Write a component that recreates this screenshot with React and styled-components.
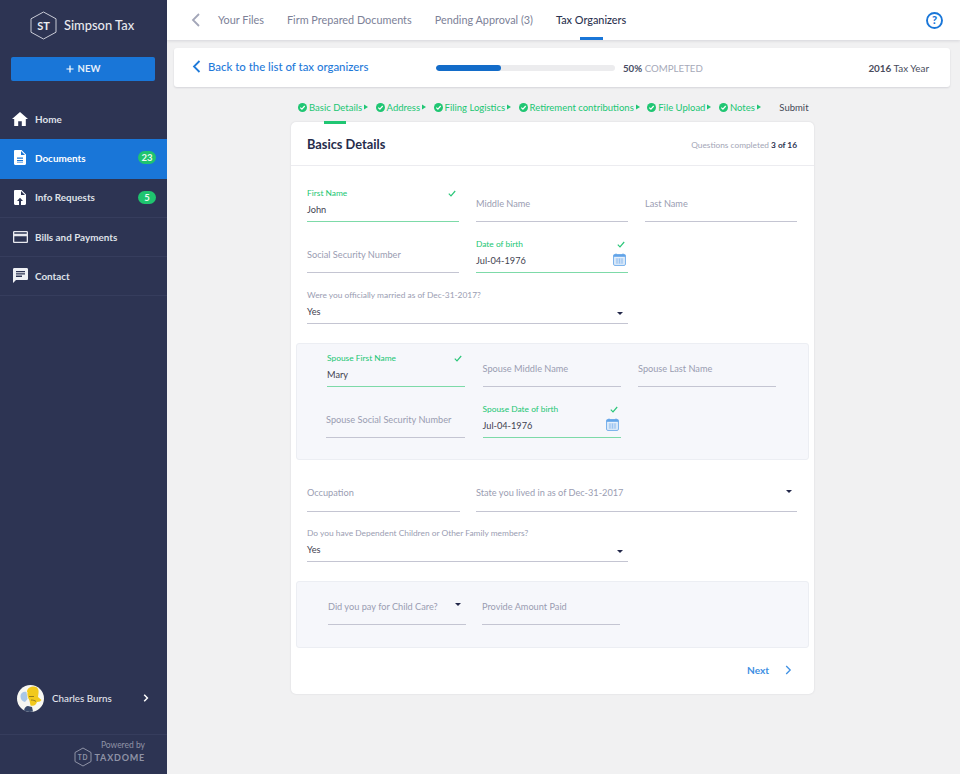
import React from 'react';
import styled, { createGlobalStyle } from 'styled-components';

const Global = createGlobalStyle`
  html, body { margin: 0; padding: 0; height: 100%; }
  body { font-family: Lato, "Open Sans", sans-serif; background: #f1f1f2; -webkit-font-smoothing: antialiased; }
  * { box-sizing: border-box; }
`;
const Page = styled.div`display: flex; width: 960px; height: 774px; overflow: hidden;`;
const Sidebar = styled.aside`width: 167px; height: 774px; flex: none; background: #2d3453; display: flex; flex-direction: column; color: #fff;`;
const Brand = styled.div`height: 57px; display: flex; align-items: center; gap: 7px; padding: 0 0 7px 30px; font-size: 12.9px; font-weight: 500; color: #e8e9ee;`;
const NewButton = styled.button`
  margin: 0 12px 0 11px; height: 24px; border: 0; border-radius: 2px; background: #1976d8; color: #e6f0fb; padding: 0 0 1px;
  font: 700 9.5px Lato, sans-serif; display: flex; align-items: center; justify-content: center; gap: 4px;
`;
const Nav = styled.nav`margin-top: 19px; display: flex; flex-direction: column;`;
const NavItem = styled.div`
  height: 39.3px; display: flex; align-items: center; padding: 0 11px 1px 12px; gap: 7px; font-size: 9.9px; font-weight: 700;
  color: ${p => p.$active ? '#fff' : '#dfe1e8'};
  background: ${p => p.$active ? '#1976d8' : 'transparent'};
  border-bottom: 1px solid ${p => p.$line ? '#363d5d' : 'transparent'};
`;
const NavIcon = styled.span`width: 16px; height: 16px; display: flex; align-items: center; justify-content: center; flex: none;`;
const NavLabel = styled.span`flex: 1;`;
const Badge = styled.span`background: #1fc46f; color: #e9fbf1; border-radius: 7px; font-size: 9.5px; font-weight: 700; height: 13px; width: 18px; display: flex; align-items: center; justify-content: center;`;
const Spacer = styled.div`flex: 1;`;
const User = styled.div`height: 73px; display: flex; align-items: center; padding: 0 18px 0 17px; gap: 8px; font-size: 9.8px; font-weight: 500; color: #e3e5ec; border-bottom: 1px solid #363d5d;`;
const Chevron = styled.span`margin-left: auto; display: flex;`;
const Powered = styled.div`height: 39px; display: flex; flex-direction: column; align-items: flex-end; padding: 6px 22px 0 0; color: #8f93a6;`;
const PoweredBy = styled.div`font-size: 8.5px; line-height: 9px;`;
const TaxDomeRow = styled.div`display: flex; align-items: center; gap: 3px; margin-top: -3px; font-size: 9px; font-weight: 700; letter-spacing: .8px;`;

const Main = styled.main`flex: 1; display: flex; flex-direction: column; min-width: 0;`;
const TopBar = styled.header`height: 40px; background: #fff; box-shadow: 0 1px 3px rgba(40,45,70,.14); display: flex; align-items: center; padding: 0 17px 0 24px; position: relative; flex: none;`;
const Tabs = styled.div`display: flex; align-items: center; gap: 23px; margin-left: 17px; height: 100%;`;
const Tab = styled.div`
  height: 100%; display: flex; align-items: center; font-size: 10.85px; position: relative; padding-bottom: 1px;
  font-weight: ${p => p.$active ? 500 : 400}; color: ${p => p.$active ? '#2c3350' : '#7c8197'};
  ${p => p.$active && `&::after{content:'';position:absolute;left:24px;bottom:0;width:23px;height:3px;background:#1976d8;}`}
`;
const Help = styled.div`margin-left: auto; display: flex;`;
const BackBar = styled.section`
  height: 39px; margin: 8px 10px 0 7px; background: #fff; border-radius: 3px; box-shadow: 0 1px 2px rgba(40,45,70,.14);
  display: flex; align-items: center; padding: 0 21px 0 18px; flex: none;
`;
const BackLink = styled.div`display: flex; align-items: center; gap: 7px; color: #1f7ad9; font-size: 11.4px; font-weight: 500; width: 244px; margin-top: -2px;`;
const Track = styled.div`width: 179px; height: 6px; border-radius: 3px; background: #ececee; flex: none; overflow: hidden;`;
const Fill = styled.div`height: 100%; border-radius: 3px; background: #136cc9;`;
const Completed = styled.div`margin-left: 8px; font-size: 9.7px; color: #a6a9b9; b { color: #474c65; font-weight: 700; }`;
const TaxYear = styled.div`margin-left: auto; font-size: 9.9px; color: #4a4d5c; b { font-weight: 700; }`;
const Steps = styled.div`height: 35px; padding-top: 5px; display: flex; align-items: center; margin-left: 131px; font-size: 9.5px; color: #20c673; flex: none;`;
const Step = styled.div`display: flex; align-items: center; margin-right: 7.5px; gap: 2px;`;
const Submit = styled.div`margin-left: 11px; color: #444856;`;
const Card = styled.section`
  position: relative; width: 523px; height: 572px; margin-left: 124px; background: #fff; border-radius: 5px;
  box-shadow: 0 0 2px rgba(40,45,70,.14); flex: none;
  &::before { content: ''; position: absolute; left: 33px; top: -1px; width: 22px; height: 3px; background: #20c673; }
`;
const CardHead = styled.div`height: 44px; border-bottom: 1px solid #ececf0; display: flex; align-items: center; justify-content: space-between; padding: 0 17px 0 16px;`;
const Title = styled.h1`margin: 0; font-size: 12.8px; font-weight: 700; color: #262c4b;`;
const Count = styled.div`font-size: 8.3px; color: #a3a6b6; margin-top: 2px; b { color: #2c3350; font-weight: 700; }`;
const Form = styled.div`padding: 5px 17px 0 16px;`;
const Grid = styled.div`display: grid; grid-template-columns: ${p => p.$cols || 'repeat(3, 152px)'}; column-gap: ${p => p.$gap || 17}px;`;
const PanelGrid = styled(Grid)`margin-top: -8px;`;
const Field = styled.div`
  position: relative; height: ${p => p.$h || 51}px; border-bottom: 1px solid ${p => p.$ok ? '#7ddaa8' : '#c4c5d2'};
  grid-column: ${p => p.$span || 'auto'};
`;
const Label = styled.div`position: absolute; left: 0; bottom: ${p => p.$up ? 13 : 12}px; font-size: 9.2px; color: #9a9db2; white-space: nowrap;`;
const Small = styled.div`position: absolute; left: 0; bottom: 23px; font-size: 8.4px; white-space: nowrap; color: ${p => p.$ok ? '#20c673' : '#9a9db2'};`;
const Value = styled.div`position: absolute; left: 0; bottom: 6px; font-size: 9.2px; color: #3f4250;`;
const Check = styled.span`position: absolute; right: 3px; bottom: 24px; display: flex;`;
const Caret = styled.span`position: absolute; right: 5px; bottom: 8px; width: 0; height: 0; border: 3px solid transparent; border-top: 3.5px solid #23284a; border-bottom: 0;`;
const CaretMid = styled(Caret)`bottom: 18px;`;
const Cal = styled.span`position: absolute; right: 2px; bottom: 6px; display: flex;`;
const Panel = styled.div`
  margin: 19px -12px 0 -11px; height: ${p => p.$h}px; background: #f6f7fb; border: 1px solid #eceef3; border-radius: 3px;
  padding: 0 0 0 ${p => p.$pl}px;
`;
const Offset = styled.div`margin-left: -1px;`;
const Footer = styled.div`display: flex; align-items: center; justify-content: flex-end; gap: 16px; padding: 16px 5px 0 0; font-size: 10.1px; font-weight: 700; color: #3f90e3;`;

const Tick = () => <svg width="8" height="7" viewBox="0 0 8 7"><path d="M.8 3.6 3 5.8 7.2 1" fill="none" stroke="#2cc77a" strokeWidth="1.2"/></svg>;
const Calendar = () => <svg width="13" height="13" viewBox="0 0 13 13"><rect x=".6" y="1.6" width="11.800" height="10.800" rx="1.200" fill="#e6f0fb" stroke="#62a4e8" strokeWidth=".9"/><rect x=".6" y="1.6" width="11.800" height="2.200" fill="#62a4e8"/><path d="M3 .5v2M10 .5v2" stroke="#62a4e8"/><path d="M2.500 6h8M2.500 8h8M2.500 10h8M4 5.500v5M6.500 5.500v5M9 5.500v5" stroke="#7db4ec" strokeWidth=".6"/></svg>;
const StepCheck = () => <svg width="9" height="9" viewBox="0 0 9 9"><circle cx="4.5" cy="4.5" r="4.5" fill="#20c673"/><path d="M2.3 4.6 3.9 6.1 6.7 3" fill="none" stroke="#fff" strokeWidth="1.2"/></svg>;
const StepArrow = () => <svg width="4" height="6" viewBox="0 0 4 6"><path d="M0 .6 4 3 0 5.4z" fill="#20c673"/></svg>;

const Plain = ({ label, span, h, up }) => <Field $span={span} $h={h}><Label $up={up}>{label}</Label></Field>;
const Filled = ({ label, value, cal }) => (
  <Field $ok><Small $ok>{label}</Small><Check><Tick/></Check><Value>{value}</Value>{cal && <Cal><Calendar/></Cal>}</Field>
);
const Select = ({ label, value, span, h }) => (
  <Field $span={span} $h={h}><Small>{label}</Small><Value>{value}</Value><Caret/></Field>
);

const steps = ['Basic Details','Address','Filing Logistics','Retirement contributions','File Upload','Notes'];

export default function App() {
  return (
    <Page>
      <Global/>
      <Sidebar>
        <Brand>
          <svg width="27" height="29" viewBox="0 0 27 29"><path d="M13.5 1 26 7.8v13.4L13.5 28 1 21.2V7.8z" fill="none" stroke="#c9cbd6" strokeWidth="1"/><text x="13.5" y="18.5" textAnchor="middle" fontFamily="Lato" fontWeight="700" fontSize="11" fill="#eceef3">ST</text></svg>
          Simpson Tax
        </Brand>
        <NewButton><svg width="8" height="8" viewBox="0 0 9 9"><path d="M4.5 .5v8M.5 4.5h8" stroke="#fff" strokeWidth="1.4"/></svg>NEW</NewButton>
        <Nav>
          <NavItem><NavIcon><svg width="16" height="14" viewBox="0 0 16 14"><path d="M8 0 0 7h2.2v7h4V9.2h3.6V14h4V7H16z" fill="#fff"/></svg></NavIcon><NavLabel>Home</NavLabel></NavItem>
          <NavItem $active><NavIcon><svg width="12" height="15" viewBox="0 0 12 15"><path fillRule="evenodd" d="M1.2 0H7.5L12 4.5v9.3c0 .7-.5 1.2-1.2 1.2H1.2C.5 15 0 14.500 0 13.800V1.200C0 .5.500 0 1.200 0zM7 1v4h4zM3 7.500v1.200h6V7.500zM3 10v1.200h6V10zM3 12.400v.6h6v-.6z" fill="#fff"/></svg></NavIcon><NavLabel>Documents</NavLabel><Badge>23</Badge></NavItem>
          <NavItem $line><NavIcon><svg width="12" height="15" viewBox="0 0 12 15"><path fillRule="evenodd" d="M1.200 0H7.500L12 4.500v9.300c0 .7-.5 1.200-1.200 1.200H7V11h2L6 7.800 3 11h2v4H1.200C.5 15 0 14.500 0 13.800V1.200C0 .5.500 0 1.200 0zM7 1v4h4z" fill="#fff"/></svg></NavIcon><NavLabel>Info Requests</NavLabel><Badge>5</Badge></NavItem>
          <NavItem $line><NavIcon><svg width="15" height="12" viewBox="0 0 15 12"><path fillRule="evenodd" d="M1.300 0h12.400C14.400 0 15 .6 15 1.300v9.400c0 .7-.6 1.300-1.300 1.300H1.300C.6 12 0 11.400 0 10.700V1.300C0 .6.600 0 1.300 0zM1.300 1.300v1.500h12.400V1.300zM1.300 5.200v5.500h12.400V5.200z" fill="#e8e9ef"/></svg></NavIcon><NavLabel>Bills and Payments</NavLabel></NavItem>
          <NavItem $line><NavIcon><svg width="15" height="15" viewBox="0 0 15 15"><path fillRule="evenodd" d="M1.300 0h12.400C14.400 0 15 .6 15 1.300v9.400c0 .7-.6 1.300-1.300 1.300H3L0 15V1.300C0 .6.600 0 1.300 0zM3 3v1.300h9V3zM3 5.300v1.300h9V5.300zM3 7.600v1.300h6V7.600z" fill="#eef0f4"/></svg></NavIcon><NavLabel>Contact</NavLabel></NavItem>
        </Nav>
        <Spacer/>
        <User>
          <svg width="27" height="27" viewBox="0 0 27 27"><circle cx="13.500" cy="13.500" r="13.500" fill="#f7f7f2"/><path d="M3.500 11c0-3 3-5 6-4l1 7-2.500 3c-3-.5-4.500-3-4.500-6z" fill="#a9c7e8"/><path d="M10 7c0-4 3.500-5.500 7-5.500 3.500 0 5 3 4.500 6.500l-.5 4 3.500 3-1.500 1.500-3 .5c-1 3-3 4.500-6.500 3.500l-1-5c-1.500-2-2.500-5-2-8.500z" fill="#f2c91c"/><path d="M12 11.500h5M14 15c2 0 4 .5 5 1.500" stroke="#7c6a1f" strokeWidth=".8" fill="none"/><path d="M7 25.500c.5-3 2-4.500 4-4.500l4 1 1 4.500c-3 .8-6 .5-9-1z" fill="#3a4a6a"/></svg>
          Charles Burns
          <Chevron><svg width="6" height="8" viewBox="0 0 6 8"><path d="M1.200 .8 4.400 4 1.200 7.200" fill="none" stroke="#fff" strokeWidth="1.500"/></svg></Chevron>
        </User>
        <Powered>
          <PoweredBy>Powered by</PoweredBy>
          <TaxDomeRow>
            <svg width="18" height="20" viewBox="0 0 18 20"><path d="M9 1 17 5.500v9L9 19l-8-4.500v-9z" fill="none" stroke="#8f93a6" strokeWidth="1"/><text x="9" y="12.500" textAnchor="middle" fontFamily="Lato" fontWeight="700" fontSize="6.500" fill="#8f93a6">TD</text></svg>
            TAXDOME
          </TaxDomeRow>
        </Powered>
      </Sidebar>
      <Main>
        <TopBar>
          <svg width="10" height="14" viewBox="0 0 10 14"><path d="M8 1 2 7l6 6" fill="none" stroke="#a3a6b8" strokeWidth="1.800"/></svg>
          <Tabs>
            <Tab>Your Files</Tab>
            <Tab>Firm Prepared Documents</Tab>
            <Tab>Pending Approval (3)</Tab>
            <Tab $active>Tax Organizers</Tab>
          </Tabs>
          <Help><svg width="17" height="17" viewBox="0 0 17 17"><circle cx="8.500" cy="8.500" r="7.500" fill="none" stroke="#1976d8" strokeWidth="1.900"/><text x="8.500" y="12.300" textAnchor="middle" fontFamily="Lato" fontWeight="900" fontSize="11" fill="#1976d8">?</text></svg></Help>
        </TopBar>
        <BackBar>
          <BackLink><svg width="9" height="13" viewBox="0 0 9 13"><path d="M7.500 1 2 6.500 7.500 12" fill="none" stroke="#1f7ad9" strokeWidth="1.800"/></svg>Back to the list of tax organizers</BackLink>
          <Track><Fill style={{ width: '36.500%' }}/></Track>
          <Completed><b>50%</b> COMPLETED</Completed>
          <TaxYear><b>2016</b> Tax Year</TaxYear>
        </BackBar>
        <Steps>
          {steps.map(s => <Step key={s}><StepCheck/>{s}<StepArrow/></Step>)}
          <Submit>Submit</Submit>
        </Steps>
        <Card>
          <CardHead><Title>Basics Details</Title><Count>Questions completed <b>3 of 16</b></Count></CardHead>
          <Form>
            <Grid>
              <Filled label="First Name" value="John"/>
              <Plain label="Middle Name"/>
              <Plain label="Last Name"/>
              <Plain label="Social Security Number"/>
              <Filled label="Date of birth" value="Jul-04-1976" cal/>
              <div/>
              <Select label="Were you officially married as of Dec-31-2017?" value="Yes" span="1 / span 2"/>
            </Grid>
            <Panel $h={117} $pl={30}>
              <PanelGrid $cols="repeat(3, 138px)" $gap={17.5}>
                <Filled label="Spouse First Name" value="Mary"/>
                <Plain label="Spouse Middle Name"/>
                <Plain label="Spouse Last Name"/>
                <Offset><Plain label="Spouse Social Security Number"/></Offset>
                <Filled label="Spouse Date of birth" value="Jul-04-1976" cal/>
              </PanelGrid>
            </Panel>
            <Grid $cols="153px 321px" $gap={16}>
              <Plain label="Occupation" h={52} up/>
              <Field $h={52}><Label $up>State you lived in as of Dec-31-2017</Label><CaretMid/></Field>
            </Grid>
            <Grid>
              <Select label="Do you have Dependent Children or Other Family members?" value="Yes" span="1 / span 2" h={50}/>
            </Grid>
            <Panel $h={67} $pl={31}>
              <PanelGrid $cols="repeat(2, 138px)" $gap={16}>
                <Field><Label>Did you pay for Child Care?</Label><CaretMid/></Field>
                <Plain label="Provide Amount Paid"/>
              </PanelGrid>
            </Panel>
            <Footer>Next<svg width="7" height="10" viewBox="0 0 7 10"><path d="M1.200 1 5.200 5 1.200 9" fill="none" stroke="#3f90e3" strokeWidth="1.300"/></svg></Footer>
          </Form>
        </Card>
      </Main>
    </Page>
  );
}
